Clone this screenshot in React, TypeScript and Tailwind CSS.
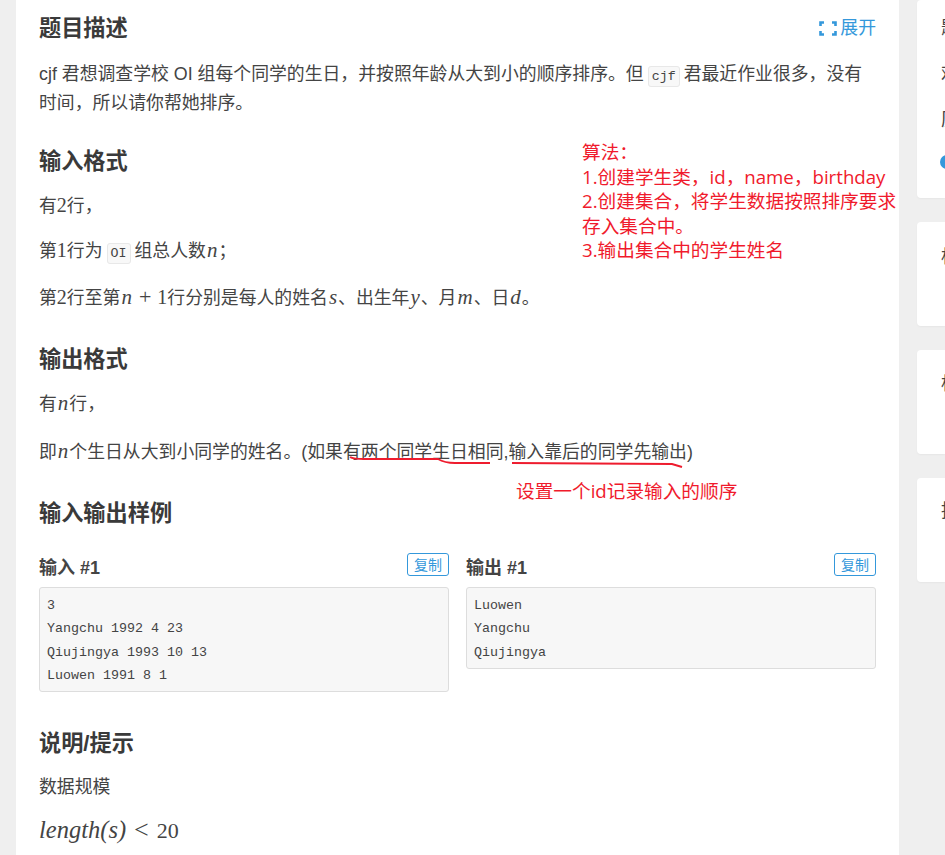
import type { ReactNode } from "react";

const sans = "font-['Helvetica_Neue','Liberation_Sans','Noto_Sans_CJK_SC',sans-serif]";

function Code({ children }: { children: ReactNode }) {
  return (
    <code className="mx-1 rounded-[3px] border border-[#e8e8e8] bg-[#f8f8f8] px-[3px] py-[2px] font-['Liberation_Mono','Noto_Sans_CJK_SC',monospace] text-[13.3px] leading-none">
      {children}
    </code>
  );
}

// math letters are italic, digits stay upright
function M({ children }: { children: ReactNode }) {
  return <span className="px-px font-['Liberation_Serif',serif] text-[21px] leading-none italic">{children}</span>;
}

function N({ children }: { children: ReactNode }) {
  return <span className="font-['Liberation_Serif',serif] text-[20px] leading-none">{children}</span>;
}

function Heading({ children, className }: { children: ReactNode; className: string }) {
  return <h2 className={`text-[22.2px] leading-[28px] font-bold text-[#3a3a3a] ${className}`}>{children}</h2>;
}

function Sample({ title, lines }: { title: string; lines: string[] }) {
  return (
    <div className="min-w-0 flex-1">
      <div className="flex h-[34px] items-start justify-between">
        <span className="pt-px text-[18px] leading-[28px] font-bold text-[#444]">{title}</span>
        <button className="h-[23px] w-[42px] rounded-[3px] border border-[#3498db] text-[14px] leading-[20px] text-[#3498db]">
          复制
        </button>
      </div>
      <pre className="rounded-[3px] border border-[#ddd] bg-[#f7f7f7] px-[7px] pt-[6px] pb-[4px] font-['Liberation_Mono',monospace] text-[13.33px] leading-[23.3px] text-[#444]">
        {lines.join("\n")}
      </pre>
    </div>
  );
}

function SideCard({ className, children }: { className: string; children: ReactNode }) {
  return (
    <div
      className={`overflow-hidden rounded-l-[4px] bg-white pl-6 text-[18px] whitespace-nowrap text-[#444] shadow-[0_1px_2px_rgba(0,0,0,0.04)] ${className}`}
    >
      {children}
    </div>
  );
}

export default function App() {
  return (
    <div className={`relative flex h-[855px] w-[945px] gap-[18px] overflow-hidden bg-[#efefef] pl-4 ${sans}`}>
      <main className="h-[855px] w-[883px] shrink-0 bg-white px-[23px] pt-[14px] text-[17.85px] leading-[29px] text-[#444]">
        <div className="flex items-center justify-between">
          <Heading className="">题目描述</Heading>
          <div className="flex items-center gap-[3px] text-[#3498db]">
            <svg width="18" height="15" viewBox="0 0 18 15" fill="none" stroke="#3498db" strokeWidth="2.6">
              <path d="M5 1.5H1.5V5M1.5 10V13.5H5M13 1.5H16.5V5M16.5 10V13.5H13" />
            </svg>
            <span>展开</span>
          </div>
        </div>
        <p className="mt-[17px]">
          cjf 君想调查学校 OI 组每个同学的生日，并按照年龄从大到小的顺序排序。但<Code>cjf</Code>君最近作业很多，没有
          <br />
          时间，所以请你帮她排序。
        </p>
        <Heading className="mt-[30px]">输入格式</Heading>
        <p className="mt-[16px]">
          有<N>2</N>行，
        </p>
        <p className="mt-[16px]">
          第<N>1</N>行为<Code>OI</Code>组总人数<M>n</M>；
        </p>
        <p className="mt-[18px]">
          第<N>2</N>行至第<M>n</M>
          <span className="mx-[6px] font-['Liberation_Serif',serif] text-[22px] leading-none">+</span>
          <N>1</N>行分别是每人的姓名<M>s</M>、出生年<M>y</M>、月<M>m</M>、日<M>d</M>。
        </p>
        <Heading className="mt-[33px]">输出格式</Heading>
        <p className="mt-[16px]">
          有<M>n</M>行，
        </p>
        <p className="mt-[19px]">
          即<M>n</M>个生日从大到小同学的姓名。(如果有两个同学生日相同,输入靠后的同学先输出)
        </p>
        <Heading className="mt-[33px]">输入输出样例</Heading>
        <div className="mt-[25px] flex items-start gap-[17px]">
          <Sample title="输入 #1" lines={["3", "Yangchu 1992 4 23", "Qiujingya 1993 10 13", "Luowen 1991 8 1"]} />
          <Sample title="输出 #1" lines={["Luowen", "Yangchu", "Qiujingya"]} />
        </div>
        <Heading className="mt-[38px]">说明/提示</Heading>
        <p className="mt-[15px]">数据规模</p>
        <p className="mt-[13px] font-['Liberation_Serif',serif] text-[22px]">
          <span className="text-[24.5px] italic">length(s)</span>
          <span className="mx-[8px] text-[26px] leading-none">&lt;</span>20
        </p>
      </main>
      <aside className="flex min-w-0 flex-1 flex-col gap-[24px]">
        <SideCard className="h-[198px] pt-[5px] leading-[46px]">
          <div>题目</div>
          <div>难度</div>
          <div>历史</div>
        </SideCard>
        <SideCard className="h-[104px] pt-[22px]">标签</SideCard>
        <SideCard className="h-[104px] pt-[21px]">标签</SideCard>
        <SideCard className="h-[104px] pt-[20px]">推荐</SideCard>
      </aside>
      <div className="absolute top-[155px] left-[940px] size-[14px] rounded-full bg-[#3498db]" />
      <div className="absolute top-[140px] left-[582px] font-['Open_Sans','Noto_Sans_CJK_SC',sans-serif] text-[18.67px] leading-[24.5px] whitespace-nowrap text-[#f01a2c]">
        算法：
        <br />
        1.创建学生类，id，name，birthday
        <br />
        2.创建集合，将学生数据按照排序要求
        <br />
        存入集合中。
        <br />
        3.输出集合中的学生姓名
      </div>
      <div className="absolute top-[479px] left-[516px] font-['Open_Sans','Noto_Sans_CJK_SC',sans-serif] text-[18.67px] leading-[24px] text-[#f01a2c]">
        设置一个id记录输入的顺序
      </div>
      <svg className="absolute top-0 left-0" width="945" height="855" fill="none" stroke="#ee1c2e" strokeWidth="2">
        <path d="M350 457C353 459 358 459 365 459L438 459C443 462 448 463 455 463L490 463" />
        <path d="M512 463L672 464L682 467" />
      </svg>
    </div>
  );
}
